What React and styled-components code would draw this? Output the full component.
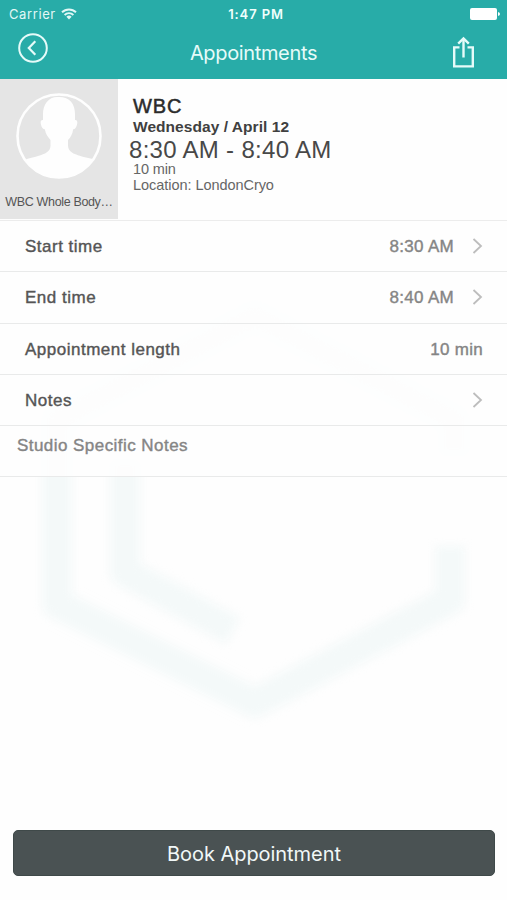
import React from "react";
import styled, { createGlobalStyle } from "styled-components";

const GlobalStyle = createGlobalStyle`
  * {
    box-sizing: border-box;
  }

  body {
    margin: 0;
    background: #fefefe;
    font-family: "Liberation Sans", Arial, sans-serif;
  }
`;

const Screen = styled.div`
  position: relative;
  display: flex;
  flex-direction: column;
  width: 507px;
  height: 900px;
  overflow: hidden;
  background: #fefefe;
`;

const Watermark = styled.svg`
  position: absolute;
  top: 290px;
  left: 0;
  filter: blur(5px);
`;

const Header = styled.header`
  height: 79px;
  background: #28aca8;
  color: #fff;
  font-family: Inter, sans-serif;
`;

const StatusBar = styled.div`
  display: grid;
  grid-template-columns: 1fr auto 1fr;
  align-items: center;
  height: 27px;
  padding: 0 7px 0 9px;
  font-size: 13px;
  line-height: 28px;
`;

const Carrier = styled.div`
  display: flex;
  align-items: center;
  gap: 5px;
  color: #e2f8f6;
  letter-spacing: 0.6px;
`;

const Clock = styled.div`
  margin-left: 3px;
  color: #f0fffd;
  font-weight: 600;
  letter-spacing: 0.9px;
`;

const Battery = styled.svg`
  justify-self: end;
`;

const NavBar = styled.div`
  display: grid;
  grid-template-columns: 1fr auto 1fr;
  height: 52px;
  padding: 0 32px 0 17px;
`;

const IconButton = styled.button`
  display: flex;
  justify-self: ${(props) => (props.$right ? "end" : "start")};
  align-self: start;
  margin: ${(props) => (props.$right ? "9px 0 0" : "5px 0 0")};
  padding: 0;
  border: 0;
  background: none;
  color: #e6fbf9;
`;

const Title = styled.h1`
  margin: 0 0 0 15px;
  color: #e6fbf9;
  font-size: 20px;
  font-weight: 400;
  line-height: 52px;
  letter-spacing: -0.35px;
`;

const Summary = styled.section`
  position: relative;
  display: flex;
  height: 141px;
  background: #fefefe;
`;

const StaffCard = styled.div`
  display: flex;
  flex-direction: column;
  align-items: center;
  width: 118px;
  height: 140px;
  padding-top: 13px;
  background: #e5e5e5;
`;

const StaffName = styled.div`
  margin-top: 13px;
  color: #555;
  font-size: 12.5px;
  line-height: 18px;
  letter-spacing: -0.35px;
  white-space: nowrap;
`;

const Details = styled.div`
  display: flex;
  flex-direction: column;
  padding: 16px 0 0 15px;
  white-space: nowrap;
`;

const ServiceName = styled.div`
  color: #2b2b2b;
  font-size: 20px;
  line-height: 22px;
  letter-spacing: 0.9px;
  -webkit-text-stroke: 0.5px;
`;

const DateLine = styled.div`
  color: #404040;
  font-size: 15.5px;
  font-weight: 700;
  line-height: 20px;
  letter-spacing: 0.05px;
`;

const TimeRange = styled.div`
  margin-left: -4px;
  color: #484848;
  font-size: 24px;
  line-height: 26px;
  letter-spacing: 0.3px;
`;

const Meta = styled.div`
  color: #666;
  font-size: 14.5px;
  line-height: ${(props) => props.$height}px;
  letter-spacing: ${(props) => props.$spacing}px;
`;

const List = styled.section`
  position: relative;
  background: rgba(254, 254, 254, 0.85);
  border-top: 1px solid #ececec;
`;

const Row = styled.div`
  display: flex;
  align-items: center;
  height: 51.25px;
  padding: 2px 24px 0 25px;
  border-bottom: 1px solid #e9eaea;
  color: #555;
  font-size: 17px;
  letter-spacing: 0.5px;
  -webkit-text-stroke: 0.4px;
`;

const Value = styled.span`
  margin-left: auto;
  color: #858585;
  letter-spacing: 0.3px;
`;

const Chevron = styled.svg`
  margin-top: -2px;
  margin-left: ${(props) => (props.$alone ? "auto" : "18px")};
`;

const StudioNotes = styled(Row)`
  align-items: flex-start;
  padding: 10px 17px 0;
  color: #858585;
  line-height: 20px;
  letter-spacing: 0.45px;
`;

const Footer = styled.footer`
  position: relative;
  margin-top: auto;
  padding: 0 12px 24px 13px;
`;

const BookButton = styled.button`
  display: block;
  width: 100%;
  height: 46px;
  padding-top: 2px;
  border: 1px solid #3f4949;
  border-radius: 5px;
  background: #4a5253;
  color: #f1f8f8;
  font-family: Inter, sans-serif;
  font-size: 20px;
  letter-spacing: -0.05px;
`;

const rows = [
  { label: "Start time", value: "8:30 AM", link: true },
  { label: "End time", value: "8:40 AM", link: true },
  { label: "Appointment length", value: "10 min" },
  { label: "Notes", link: true },
];

const WifiIcon = () => (
  <svg width="16" height="12" viewBox="0 0 16 12" fill="none" stroke="currentColor" strokeWidth="1.9">
    <path d="M1 4.3a10 10 0 0 1 14 0" />
    <path d="M3.6 7a6.2 6.2 0 0 1 8.8 0" />
    <path d="M5.4 8.8a3.7 3.7 0 0 1 5.2 0L8 11.4z" fill="currentColor" stroke="none" />
  </svg>
);

const BackIcon = () => (
  <svg width="32" height="32" viewBox="0 0 32 32" fill="none" stroke="currentColor" strokeWidth="2">
    <circle cx="16" cy="16" r="13.8" />
    <path d="M18.3 9.3L11.8 16l6.5 6.8" strokeWidth="2.2" />
  </svg>
);

const ShareIcon = () => (
  <svg width="24" height="34" viewBox="0 0 24 34" fill="none" stroke="currentColor" strokeWidth="2.4">
    <path d="M8.5 11.4H3.2v19h18.6v-19h-5.3" />
    <path d="M12.5 21.5V2.8" />
    <path d="M7.2 7.6l5.3-5.2 5.3 5.2" />
  </svg>
);

const Avatar = () => (
  <svg width="88" height="88" viewBox="0 0 88 88">
    <defs>
      <clipPath id="face">
        <circle cx="44" cy="44" r="42" />
      </clipPath>
    </defs>
    <path
      clipPath="url(#face)"
      fill="#fefefe"
      d="M44 5C34 4 28 12 28 22v6c-2.500-.3-2.700 2-2 4.700.7 2.800 2 4.500 3.800 4.600 1 5 3.200 8 5.700 10.700v5.500c0 6-5.500 8.500-12.500 10.500C17 66 12 66 7 70v20h76V70c-5-4-12-4-17.500-6C58.500 62 53 59.500 53 53.500V48c2.700-2.500 4.400-5.600 5.200-10.700 1.800-.2 3.100-2 3.800-4.600.7-2.700.3-5-2-4.700v-6C60 12 55 5 44 5z"
    />
    <circle cx="44" cy="44" r="41.500" fill="none" stroke="#fefefe" strokeWidth="2.600" />
  </svg>
);

const App = () => {
  return (
    <Screen>
      <GlobalStyle />
      <Watermark
        width="507"
        height="450"
        viewBox="0 290 507 450"
        fill="none"
        stroke="#f4f9f9"
        strokeWidth="30"
        strokeLinejoin="round"
      >
        <path d="M57 604V420L255 316l199 104v35" />
        <path d="M57 460V604L255 703L450 600V546" />
        <path d="M125 460V572L233 631" />
      </Watermark>
      <Header>
        <StatusBar>
          <Carrier>
            Carrier
            <WifiIcon />
          </Carrier>
          <Clock>1:47 PM</Clock>
          <Battery width="30" height="12" viewBox="0 0 30 12" fill="#fff">
            <rect width="27" height="12" rx="2" />
            <path d="M28 4q2 .5 2 2t-2 2z" />
          </Battery>
        </StatusBar>
        <NavBar>
          <IconButton aria-label="Back">
            <BackIcon />
          </IconButton>
          <Title>Appointments</Title>
          <IconButton $right aria-label="Share">
            <ShareIcon />
          </IconButton>
        </NavBar>
      </Header>
      <Summary>
        <StaffCard>
          <Avatar />
          <StaffName>WBC Whole Body…</StaffName>
        </StaffCard>
        <Details>
          <ServiceName>WBC</ServiceName>
          <DateLine>Wednesday / April 12</DateLine>
          <TimeRange>8:30 AM - 8:40 AM</TimeRange>
          <Meta $height={12} $spacing={-0.15}>10 min</Meta>
          <Meta $height={21} $spacing={-0.05}>Location: LondonCryo</Meta>
        </Details>
      </Summary>
      <List>
        {rows.map((row) => (
          <Row key={row.label}>
            {row.label}
            {row.value ? <Value>{row.value}</Value> : null}
            {row.link ? (
              <Chevron $alone={!row.value} width="11" height="16" viewBox="0 0 11 16" fill="none" stroke="#bdbdbd" strokeWidth="1.8">
                <path d="M1.500 1L9 8l-7.500 7" />
              </Chevron>
            ) : null}
          </Row>
        ))}
        <StudioNotes>Studio Specific Notes</StudioNotes>
      </List>
      <Footer>
        <BookButton>Book Appointment</BookButton>
      </Footer>
    </Screen>
  );
};

export default App;
